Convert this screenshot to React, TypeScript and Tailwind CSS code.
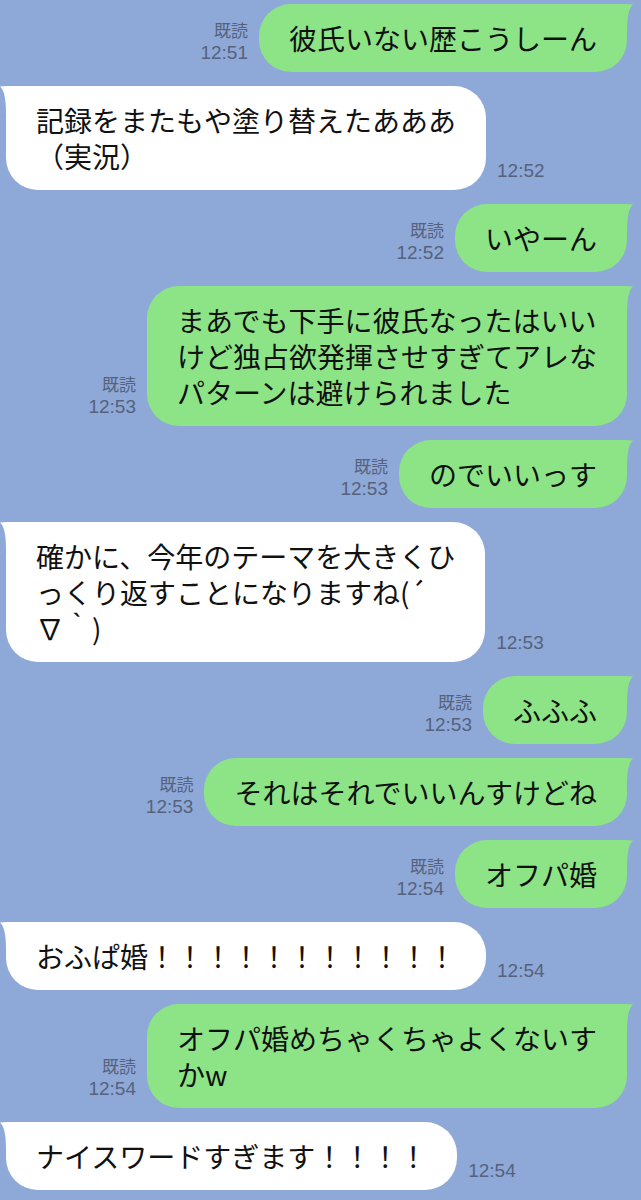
type Msg = {
  side: "me" | "them";
  lines: string[];
  time: string;
};

const messages: Msg[] = [
  { side: "me", lines: ["彼氏いない歴こうしーん"], time: "12:51" },
  { side: "them", lines: ["記録をまたもや塗り替えたあああ", "（実況）"], time: "12:52" },
  { side: "me", lines: ["いやーん"], time: "12:52" },
  {
    side: "me",
    lines: ["まあでも下手に彼氏なったはいい", "けど独占欲発揮させすぎてアレな", "パターンは避けられました"],
    time: "12:53",
  },
  { side: "me", lines: ["のでいいっす"], time: "12:53" },
  {
    side: "them",
    lines: ["確かに、今年のテーマを大きくひ", "っくり返すことになりますね(´", "∇｀)"],
    time: "12:53",
  },
  { side: "me", lines: ["ふふふ"], time: "12:53" },
  { side: "me", lines: ["それはそれでいいんすけどね"], time: "12:53" },
  { side: "me", lines: ["オフパ婚"], time: "12:54" },
  { side: "them", lines: ["おふぱ婚！！！！！！！！！！！"], time: "12:54" },
  { side: "me", lines: ["オフパ婚めちゃくちゃよくないす", "かw"], time: "12:54" },
  { side: "them", lines: ["ナイスワードすぎます！！！！"], time: "12:54" },
];

// little horn on the top corner of each bubble
function Tail({ color, flip }: { color: string; flip?: boolean }) {
  return (
    <svg
      width="40"
      height="30"
      viewBox="0 0 40 30"
      className={flip ? "absolute top-0 left-[-6px] -scale-x-100" : "absolute top-0 right-[-6px]"}
    >
      <path d="M0 0 H22 C30 0 36 0 40 0.5 C36 4 34 12 34 28 V30 H0 Z" fill={color} />
    </svg>
  );
}

function Bubble({ msg }: { msg: Msg }) {
  const me = msg.side === "me";
  const color = me ? "#8de486" : "#ffffff";
  return (
    <div
      className={`relative rounded-[32px] px-[30px] py-4 whitespace-nowrap text-[28px] leading-[36px] text-[#111111] font-['Noto_Sans_CJK_JP',sans-serif] ${
        me ? "bg-[#8de486]" : "bg-white"
      }`}
    >
      <Tail color={color} flip={!me} />
      <div className="relative">
        {msg.lines.map((line, i) => (
          <div key={i}>{line}</div>
        ))}
      </div>
    </div>
  );
}

function Stamp({ msg }: { msg: Msg }) {
  const me = msg.side === "me";
  return (
    <div className={`mb-2 flex flex-col text-[#56627c] ${me ? "items-end" : "items-start"}`}>
      {me && (
        <span className="text-[17px] leading-[23px] font-['Noto_Sans_CJK_JP',sans-serif]">既読</span>
      )}
      <span className="text-[19px] leading-[23px] font-['Liberation_Sans',sans-serif]">{msg.time}</span>
    </div>
  );
}

export default function App() {
  return (
    <div className="h-[1200px] w-full overflow-hidden bg-[#8ea9d7]">
      <div className="flex flex-col gap-[14px] pt-1 pl-[6px] pr-[14px]">
        {messages.map((msg, i) =>
          msg.side === "me" ? (
            <div key={i} className="flex items-end justify-end gap-[11px]">
              <Stamp msg={msg} />
              <Bubble msg={msg} />
            </div>
          ) : (
            <div key={i} className="flex items-end justify-start gap-[11px]">
              <Bubble msg={msg} />
              <Stamp msg={msg} />
            </div>
          )
        )}
      </div>
    </div>
  );
}
